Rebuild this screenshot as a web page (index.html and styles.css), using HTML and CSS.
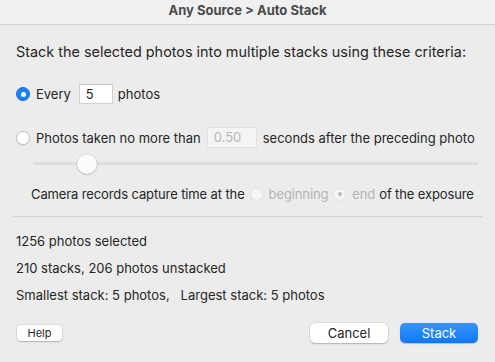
FILE: index.html
```html
<!DOCTYPE html>
<html>
<head>
<meta charset="utf-8">
<link rel="stylesheet" href="styles.css">
</head>
<body>
<div class="window">
  <div class="titlebar">Any Source &gt; Auto Stack</div>
  <div class="content">
    <p class="intro">Stack the selected photos into multiple stacks using these criteria:</p>

    <div class="row every">
      <span class="radio on"></span>
      <span class="label">Every</span>
      <span class="field count">5</span>
      <span class="label">photos</span>
    </div>

    <div class="row taken">
      <span class="radio"></span>
      <span class="label">Photos taken no more than</span>
      <span class="field secs disabled">0.50</span>
      <span class="label">seconds after the preceding photo</span>
    </div>

    <div class="slider">
      <div class="track"></div>
      <div class="knob"></div>
    </div>

    <div class="row camera">
      <span class="label">Camera records capture time at the</span>
      <span class="radio dis"></span>
      <span class="label muted">beginning</span>
      <span class="radio dis dot"></span>
      <span class="label muted">end</span>
      <span class="label tight">of the exposure</span>
    </div>

    <hr class="sep">

    <div class="stats">
      <p>1256 photos selected</p>
      <p>210 stacks, 206 photos unstacked</p>
      <p>Smallest stack: 5 photos, &nbsp; Largest stack: 5 photos</p>
    </div>

    <div class="buttons">
      <button class="btn help">Help</button>
      <div class="spacer"></div>
      <button class="btn cancel">Cancel</button>
      <button class="btn primary">Stack</button>
    </div>
  </div>
</div>
</body>
</html>
```

FILE: styles.css
```css
* { box-sizing: border-box; }
html, body { margin: 0; padding: 0; }
body {
  width: 495px;
  height: 362px;
  background: #ececec;
  font-family: Inter, "Helvetica Neue", "Liberation Sans", sans-serif;
  font-size: 13px;
  color: #262626;
  overflow: hidden;
}
.window { width: 495px; height: 362px; display: flex; flex-direction: column; }
.titlebar {
  height: 25px;
  background: #f0f0f0;
  border-bottom: 1px solid #d4d4d4;
  text-align: center;
  font-weight: 700;
  color: #4a4a4a;
  line-height: 21px;
  font-size: 13px;
}
.content { padding: 0 13px 0 16px; display: flex; flex-direction: column; }
.intro { margin: 19px 0 0 0; line-height: 16px; height: 16px; white-space: nowrap; font-size: 14.4px; }

.row { display: flex; align-items: center; white-space: nowrap; }
.every { margin-top: 24px; height: 20px; }
.taken { margin-top: 23px; height: 21px; }
.label { line-height: 16px; }

.radio {
  width: 14px; height: 14px; border-radius: 50%;
  background: #fff;
  border: 1px solid #c4c4c4;
  box-shadow: 0 0.5px 1px rgba(0,0,0,0.12);
  margin-right: 6px;
  position: relative;
  flex: none;
}
.radio.on {
  background: #1a80fa;
  border-color: #1575ea;
}
.radio.on::after {
  content: ""; position: absolute; left: 3.5px; top: 3.5px;
  width: 5px; height: 5px; border-radius: 50%; background: #fff;
}
.radio.dis {
  width: 13px; height: 13px;
  background: #f6f6f6; border-color: #e0e0e0; box-shadow: none;
  margin-left: 5px; margin-right: 6px;
}
.radio.dis.dot::after {
  content: ""; position: absolute; left: 3.5px; top: 3.5px;
  width: 4px; height: 4px; border-radius: 50%; background: #b9b9b9;
}
.muted { color: #b4b4b4; }
.tight { margin-left: 4px; }

.field {
  background: #fff;
  border: 1px solid #d0d0d0;
  border-top-color: #c4c4c4;
  line-height: 18px;
  padding: 0 6px;
  flex: none;
}
.count { width: 34px; height: 20px; margin: 0 5px 0 8px; }
.secs { width: 50px; height: 21px; line-height: 19px; margin: 0 6px 0 6px; }
.secs.disabled { background: #f4f4f4; border-color: #e2e2e2; color: #b6b6b6; }

.slider { position: relative; height: 20px; margin-top: 6px; margin-left: 17px; margin-right: 4px; }
.track {
  position: absolute; left: 0; right: 0; top: 8px; height: 3px;
  background: #dedede; border-radius: 2px;
}
.knob {
  position: absolute; left: 44px; top: 0;
  width: 20px; height: 20px; border-radius: 50%;
  background: #fbfbfb;
  box-shadow: 0 0 0 0.5px rgba(0,0,0,0.12), 0 1px 2px rgba(0,0,0,0.15);
}

.camera { margin-top: 12px; height: 16px; padding-left: 15px; letter-spacing: -0.12px; }

.sep { margin: 14px 0 0 -3px; border: 0; border-top: 1px solid #d3d3d3; height: 0; }

.stats { margin-top: 16px; }
.stats p { margin: 0 0 11px 0; line-height: 16px; white-space: nowrap; }

.buttons { display: flex; align-items: center; margin-top: 9px; margin-left: 1px; padding-right: 4px; }
.spacer { flex: 1; }
.btn {
  font-family: inherit;
  border: 0;
  background: #fff;
  border-radius: 5px;
  box-shadow: 0 0 0 0.5px rgba(0,0,0,0.12), 0 1px 1.5px rgba(0,0,0,0.2);
  color: #262626;
  padding: 0;
}
.help { width: 45px; height: 16px; font-size: 11px; border-radius: 4px; }
.cancel { width: 78px; height: 20px; font-size: 13px; margin-right: 12px; }
.primary {
  width: 78px; height: 20px; font-size: 13px;
  background: linear-gradient(#3a94fd, #0f78f7);
  color: #fff;
  box-shadow: 0 0.5px 1px rgba(0,0,0,0.2);
}
```
